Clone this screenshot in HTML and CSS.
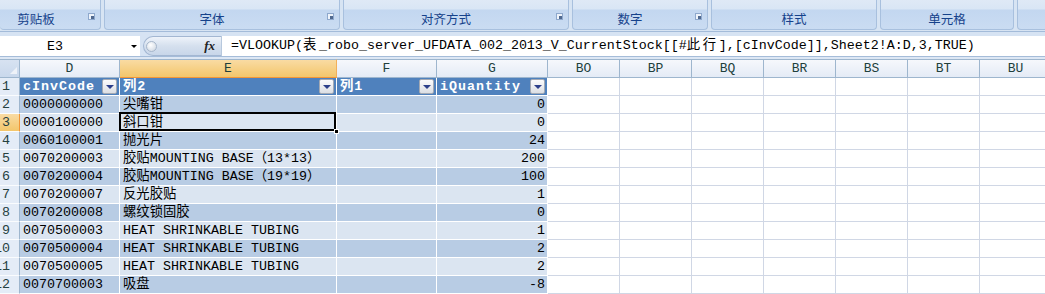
FILE: index.html
```html
<!DOCTYPE html>
<html lang="zh-CN">
<head>
  <meta charset="UTF-8">
  <title>Sheet1 - Excel</title>
  <link rel="stylesheet" href="styles.css">
</head>
<body>
  <div class="ribbon">
    <div class="group g1"><div class="glabel">剪贴板</div><span class="launch"></span></div>
    <div class="group g2"><div class="glabel">字体</div><span class="launch"></span></div>
    <div class="group g3"><div class="glabel">对齐方式</div><span class="launch"></span></div>
    <div class="group g4"><div class="glabel">数字</div><span class="launch"></span></div>
    <div class="group g5"><div class="glabel">样式</div></div>
    <div class="group g6"><div class="glabel">单元格</div></div>
    <div class="group g7"><div class="glabel"></div></div>
  </div>

  <div class="fbar">
    <div class="namebox"><span class="ref">E3</span><span class="nb-arrow"></span></div>
    <div class="pill"><span class="knob"></span><span class="fx">fx</span></div>
    <div class="formula">=VLOOKUP(<span class="w">表</span>_robo_server_UFDATA_002_2013_V_CurrentStock[[#<span class="w">此行</span>],[cInvCode]],Sheet2!A:D,3,TRUE)</div>
  </div>
  <div class="split"></div>

  <table class="sheet">
    <colgroup>
      <col style="width:20px"><col style="width:100px"><col style="width:217px"><col style="width:100px"><col style="width:111px">
      <col style="width:72px"><col style="width:72px"><col style="width:72px"><col style="width:72px"><col style="width:72px"><col style="width:72px"><col style="width:72px">
    </colgroup>
    <tr class="cols">
      <th class="corner"><span class="tri"></span></th>
      <th>D</th><th class="on">E</th><th>F</th><th>G</th>
      <th>BO</th><th>BP</th><th>BQ</th><th>BR</th><th>BS</th><th>BT</th><th>BU</th>
    </tr>
    <tr class="hd">
      <td class="rh"><span class="n">1</span></td>
      <td class="t">cInvCode<span class="flt"></span></td>
      <td class="t">列2<span class="flt"></span></td>
      <td class="t">列1<span class="flt"></span></td>
      <td class="t">iQuantity<span class="flt"></span></td>
      <td></td><td></td><td></td><td></td><td></td><td></td><td></td>
    </tr>
    <tr class="dk">
      <td class="rh"><span class="n">2</span></td>
      <td class="t">0000000000</td><td class="t">尖嘴钳</td><td class="t"></td><td class="t num">0</td>
      <td></td><td></td><td></td><td></td><td></td><td></td><td></td>
    </tr>
    <tr class="lt">
      <td class="rh on"><span class="n">3</span></td>
      <td class="t">0000100000</td><td class="t sel">斜口钳</td><td class="t"></td><td class="t num">0</td>
      <td></td><td></td><td></td><td></td><td></td><td></td><td></td>
    </tr>
    <tr class="dk">
      <td class="rh"><span class="n">4</span></td>
      <td class="t">0060100001</td><td class="t">抛光片</td><td class="t"></td><td class="t num">24</td>
      <td></td><td></td><td></td><td></td><td></td><td></td><td></td>
    </tr>
    <tr class="lt">
      <td class="rh"><span class="n">5</span></td>
      <td class="t">0070200003</td><td class="t">胶贴MOUNTING BASE（13*13）</td><td class="t"></td><td class="t num">200</td>
      <td></td><td></td><td></td><td></td><td></td><td></td><td></td>
    </tr>
    <tr class="dk">
      <td class="rh"><span class="n">6</span></td>
      <td class="t">0070200004</td><td class="t">胶贴MOUNTING BASE（19*19）</td><td class="t"></td><td class="t num">100</td>
      <td></td><td></td><td></td><td></td><td></td><td></td><td></td>
    </tr>
    <tr class="lt">
      <td class="rh"><span class="n">7</span></td>
      <td class="t">0070200007</td><td class="t">反光胶贴</td><td class="t"></td><td class="t num">1</td>
      <td></td><td></td><td></td><td></td><td></td><td></td><td></td>
    </tr>
    <tr class="dk">
      <td class="rh"><span class="n">8</span></td>
      <td class="t">0070200008</td><td class="t">螺纹锁固胶</td><td class="t"></td><td class="t num">0</td>
      <td></td><td></td><td></td><td></td><td></td><td></td><td></td>
    </tr>
    <tr class="lt">
      <td class="rh"><span class="n">9</span></td>
      <td class="t">0070500003</td><td class="t">HEAT SHRINKABLE TUBING</td><td class="t"></td><td class="t num">1</td>
      <td></td><td></td><td></td><td></td><td></td><td></td><td></td>
    </tr>
    <tr class="dk">
      <td class="rh"><span class="n">10</span></td>
      <td class="t">0070500004</td><td class="t">HEAT SHRINKABLE TUBING</td><td class="t"></td><td class="t num">2</td>
      <td></td><td></td><td></td><td></td><td></td><td></td><td></td>
    </tr>
    <tr class="lt">
      <td class="rh"><span class="n">11</span></td>
      <td class="t">0070500005</td><td class="t">HEAT SHRINKABLE TUBING</td><td class="t"></td><td class="t num">2</td>
      <td></td><td></td><td></td><td></td><td></td><td></td><td></td>
    </tr>
    <tr class="dk">
      <td class="rh"><span class="n">12</span></td>
      <td class="t">0070700003</td><td class="t">吸盘</td><td class="t"></td><td class="t num">-8</td>
      <td></td><td></td><td></td><td></td><td></td><td></td><td></td>
    </tr>
  </table>
</body>
</html>
```

FILE: styles.css
```css
body {
  margin: 0;
  width: 1045px;
  height: 294px;
  overflow: hidden;
  background-color: #fff;
  font-family: "Liberation Mono", "Noto Sans CJK SC", monospace;
  font-size: 13.33px;
  color: #000;
}

/* ribbon (only the bottom strip is visible) */
.ribbon {
  display: flex;
  gap: 3px;
  height: 31px;
  background-color: #d7e4f3;
  border-bottom: 1px solid #a3bbd9;
  overflow: hidden;
}

.group {
  flex: none;
  position: relative;
  display: flex;
  align-items: flex-end;
  height: 30px;
  box-sizing: border-box;
  border: 1px solid #a8c0de;
  border-top: 0;
  border-radius: 0 0 4px 4px;
  background: linear-gradient(#dfe9f6, #d9e6f5 9px, #c3d7f0 10px, #cadcf2);
}

.glabel {
  flex: 1;
  height: 20px;
  line-height: 20px;
  text-align: center;
  font-family: "Noto Sans CJK SC", sans-serif;
  font-size: 12.5px;
  color: #15428b;
}

.g1 { width: 101px; border-left: 0; }
.g1 .glabel { padding-right: 28px; }
.g2 { width: 236px; }
.g3 { width: 226px; }
.g4 { width: 136px; }
.g2 .glabel, .g3 .glabel, .g4 .glabel { padding-right: 20px; }
.g5 { width: 166px; }
.g6 { width: 134px; }
.g7 { width: 60px; }

.launch {
  position: absolute;
  right: 5px;
  top: 13px;
  width: 5px;
  height: 5px;
  border: 1px solid #8ea8cc;
  background-color: #eef3fa;
}

.launch::after {
  content: "";
  position: absolute;
  right: 0;
  bottom: 0;
  width: 3px;
  height: 3px;
  background-color: #50698f;
}

/* formula bar */
.fbar {
  display: flex;
  height: 20px;
  padding-top: 4px;
  background-color: #d6e3f3;
  border-bottom: 1px solid #a5bcd9;
}

.namebox {
  flex: none;
  display: flex;
  align-items: center;
  width: 140px;
  background-color: #fff;
}

.ref {
  width: 110px;
  text-align: center;
}

.nb-arrow {
  margin-left: 21px;
  width: 0;
  height: 0;
  border-left: 3px solid transparent;
  border-right: 3px solid transparent;
  border-top: 3px solid #000;
}

.pill {
  flex: none;
  position: relative;
  margin-left: 3px;
  width: 78px;
  box-sizing: border-box;
  border: 1px solid #a3b7d2;
  border-right: 0;
  border-radius: 10px 0 0 10px;
  background: linear-gradient(#eef3fa, #d5e0ee 50%, #c8d6e9);
}

.knob {
  position: absolute;
  left: 2px;
  top: 4px;
  width: 9px;
  height: 9px;
  border-radius: 50%;
  border: 1px solid #a6b6cb;
  background: radial-gradient(circle at 40% 35%, #fff, #c9d3df);
}

.fx {
  position: absolute;
  right: 6px;
  top: 1px;
  font-family: "Liberation Serif", serif;
  font-style: italic;
  font-weight: bold;
  font-size: 13px;
  color: #222;
}

.formula {
  flex: 1;
  padding-left: 9px;
  line-height: 20px;
  background-color: #fff;
  border-left: 1px solid #b7c8dd;
  white-space: nowrap;
  overflow: hidden;
}

.w {
  letter-spacing: 2.6px;
}

.split {
  height: 2px;
  background-color: #dde7f4;
}

/* worksheet */
.sheet {
  table-layout: fixed;
  width: 1052px;
  border-collapse: separate;
  border-spacing: 0;
}

.sheet td,
.sheet th {
  box-sizing: border-box;
  height: 18px;
  padding: 0 3px;
  line-height: 17px;
  white-space: nowrap;
  border-right: 1px solid #d0d7e5;
  border-bottom: 1px solid #d0d7e5;
  font-weight: normal;
}

.cols th {
  height: 19px;
  padding: 0;
  border-top: 1px solid #9eb6ce;
  border-right-color: #9eb6ce;
  border-bottom-color: #9eb6ce;
  background: linear-gradient(#f6f8fc, #e4ebf6);
  color: #213f3c;
  text-align: center;
  font-size: 13px;
}

.cols th.on {
  background: linear-gradient(#f9dba3, #f3c66b);
  border-bottom-color: #f29536;
  border-right-color: #f2b05a;
}

.cols th.corner {
  position: relative;
  background: linear-gradient(#d7e2f1, #c9d8ec);
}

.tri {
  position: absolute;
  right: 2px;
  bottom: 3px;
  width: 0;
  height: 0;
  border-left: 7px solid transparent;
  border-bottom: 7px solid #eef2f8;
}

.sheet td.rh {
  padding: 0;
  overflow: hidden;
  background-color: #e4ecf7;
  border-right-color: #9eb6ce;
  border-bottom-color: #fafcfe;
  color: #25413f;
}

.sheet td.rh.on {
  background: linear-gradient(#f9dba3, #f3c66b);
  border-right-color: #f29536;
}

.n {
  display: block;
  width: 30px;
  margin-left: -20px;
  text-align: right;
}

.sheet td.t {
  border-right-color: #fff;
  border-bottom-color: #fff;
}

.dk td.t { background-color: #b8cce4; }
.lt td.t { background-color: #dbe5f1; }

.hd td.t {
  position: relative;
  background-color: #4f81bd;
  color: #fff;
  font-weight: bold;
  letter-spacing: 1px;
}

.flt {
  position: absolute;
  right: 2px;
  top: 1px;
  width: 15px;
  height: 15px;
  box-sizing: border-box;
  border: 1px solid #a3a9b4;
  border-radius: 2px;
  background: linear-gradient(#fbfbfc, #dcdfe4);
}

.flt::after {
  content: "";
  position: absolute;
  left: 3px;
  top: 5px;
  border-left: 4px solid transparent;
  border-right: 4px solid transparent;
  border-top: 4px solid #2c3f8a;
}

.sheet td.num {
  text-align: right;
  padding-right: 2px;
}

.sheet td.sel {
  position: relative;
}

.sel::after {
  content: "";
  position: absolute;
  left: -1px;
  top: -2px;
  right: 0;
  bottom: 0;
  border: 2px solid #000;
}

.sel::before {
  content: "";
  position: absolute;
  right: -3px;
  bottom: -3px;
  z-index: 1;
  width: 5px;
  height: 5px;
  background-color: #000;
  border: 1px solid #fff;
  box-sizing: border-box;
}
```
